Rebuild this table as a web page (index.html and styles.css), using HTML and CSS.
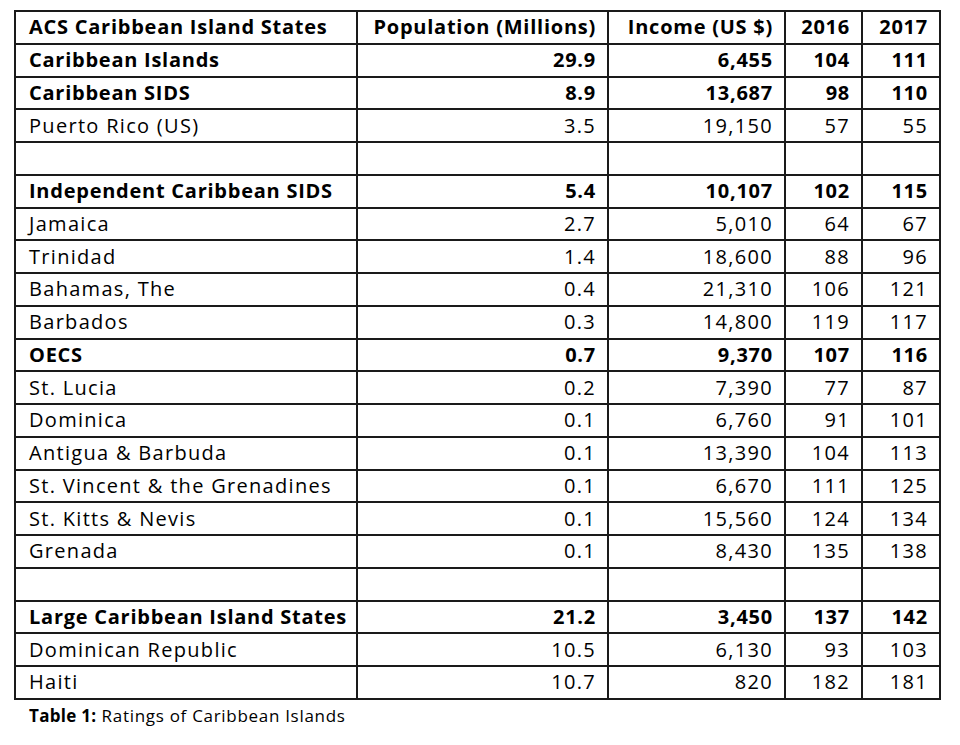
FILE: index.html
```html
<!DOCTYPE html>
<html>
<head>
<meta charset="utf-8">
<link rel="stylesheet" href="styles.css">
</head>
<body>
<div class="wrap">
<table class="ratings">
<colgroup>
<col class="c-name"><col class="c-pop"><col class="c-inc"><col class="c-y"><col class="c-y2">
</colgroup>
<thead>
<tr class="b"><th class="l">ACS Caribbean Island States</th><th>Population (Millions)</th><th>Income (US $)</th><th>2016</th><th>2017</th></tr>
</thead>
<tbody>
<tr class="b"><td class="l">Caribbean Islands</td><td>29.9</td><td>6,455</td><td>104</td><td>111</td></tr>
<tr class="b"><td class="l">Caribbean SIDS</td><td>8.9</td><td>13,687</td><td>98</td><td>110</td></tr>
<tr><td class="l">Puerto Rico (US)</td><td>3.5</td><td>19,150</td><td>57</td><td>55</td></tr>
<tr><td class="l"></td><td></td><td></td><td></td><td></td></tr>
<tr class="b"><td class="l">Independent Caribbean SIDS</td><td>5.4</td><td>10,107</td><td>102</td><td>115</td></tr>
<tr><td class="l">Jamaica</td><td>2.7</td><td>5,010</td><td>64</td><td>67</td></tr>
<tr><td class="l">Trinidad</td><td>1.4</td><td>18,600</td><td>88</td><td>96</td></tr>
<tr><td class="l">Bahamas, The</td><td>0.4</td><td>21,310</td><td>106</td><td>121</td></tr>
<tr><td class="l">Barbados</td><td>0.3</td><td>14,800</td><td>119</td><td>117</td></tr>
<tr class="b"><td class="l">OECS</td><td>0.7</td><td>9,370</td><td>107</td><td>116</td></tr>
<tr><td class="l">St. Lucia</td><td>0.2</td><td>7,390</td><td>77</td><td>87</td></tr>
<tr><td class="l">Dominica</td><td>0.1</td><td>6,760</td><td>91</td><td>101</td></tr>
<tr><td class="l">Antigua &amp; Barbuda</td><td>0.1</td><td>13,390</td><td>104</td><td>113</td></tr>
<tr><td class="l">St. Vincent &amp; the Grenadines</td><td>0.1</td><td>6,670</td><td>111</td><td>125</td></tr>
<tr><td class="l">St. Kitts &amp; Nevis</td><td>0.1</td><td>15,560</td><td>124</td><td>134</td></tr>
<tr><td class="l">Grenada</td><td>0.1</td><td>8,430</td><td>135</td><td>138</td></tr>
<tr><td class="l"></td><td></td><td></td><td></td><td></td></tr>
<tr class="b"><td class="l">Large Caribbean Island States</td><td>21.2</td><td>3,450</td><td>137</td><td>142</td></tr>
<tr><td class="l">Dominican Republic</td><td>10.5</td><td>6,130</td><td>93</td><td>103</td></tr>
<tr><td class="l">Haiti</td><td>10.7</td><td>820</td><td>182</td><td>181</td></tr>
</tbody>
</table>
<p class="caption"><span class="cap-b">Table 1:</span> Ratings of Caribbean Islands</p>
</div>
</body>
</html>
```

FILE: styles.css
```css
html, body {
  margin: 0;
  padding: 0;
  background: #fff;
}
body {
  font-family: "Open Sans", "Liberation Sans", sans-serif;
  color: #000;
}
.wrap {
  padding: 10px 0 0 14px;
}
.ratings {
  border-collapse: collapse;
  table-layout: fixed;
  width: 927px;
  font-size: 20px;
}
.c-name { width: 342px; }
.c-pop { width: 251px; }
.c-inc { width: 177px; }
.c-y { width: 77px; }
.c-y2 { width: 78px; }
.ratings th,
.ratings td {
  border: 2px solid #1a1a1a;
  height: 30.76px;
  padding: 0 11px 0 13px;
  text-align: right;
  vertical-align: middle;
  white-space: nowrap;
  line-height: 1;
  font-weight: 400;
  letter-spacing: 1.3px;
}
.ratings .b th,
.ratings .b td {
  font-weight: 700;
  letter-spacing: 0.75px;
}
.ratings .l {
  text-align: left;
}
.caption {
  margin: 4px 0 0 15px;
  font-size: 17px;
  letter-spacing: 0.7px;
}
.cap-b {
  font-weight: 700;
  letter-spacing: 0.3px;
}
```
